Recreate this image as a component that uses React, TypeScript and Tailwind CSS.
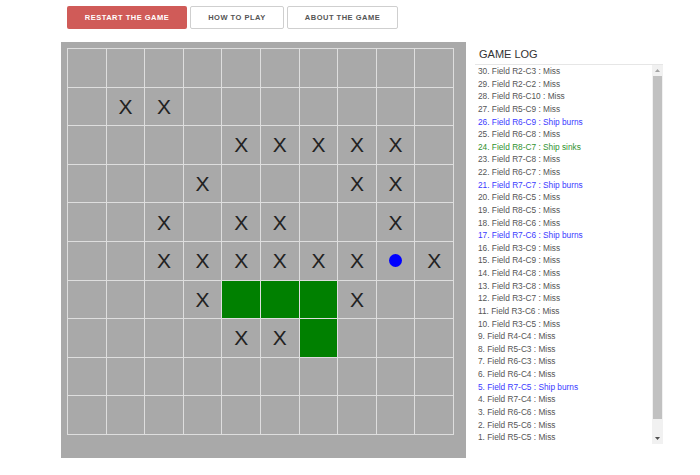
import React from "react";

type Cell = "" | "x" | "g" | "d";

const marks: Record<string, Cell> = {};
const misses = [
  "2-3","2-2","6-10","5-9","6-8","7-8","6-7","6-5","8-5","8-6","3-9","4-9","4-8","3-8","3-7","3-6","3-5","4-4","5-3","6-3","6-4","7-4","6-6","5-6","5-5",
];
misses.forEach((k) => (marks[k] = "x"));
["7-5", "7-6", "7-7", "8-7"].forEach((k) => (marks[k] = "g"));
marks["6-9"] = "d";

type Log = { t: string; c: "m" | "b" | "s" };
const logs: Log[] = [
  { t: "30. Field R2-C3 : Miss", c: "m" },
  { t: "29. Field R2-C2 : Miss", c: "m" },
  { t: "28. Field R6-C10 : Miss", c: "m" },
  { t: "27. Field R5-C9 : Miss", c: "m" },
  { t: "26. Field R6-C9 : Ship burns", c: "b" },
  { t: "25. Field R6-C8 : Miss", c: "m" },
  { t: "24. Field R8-C7 : Ship sinks", c: "s" },
  { t: "23. Field R7-C8 : Miss", c: "m" },
  { t: "22. Field R6-C7 : Miss", c: "m" },
  { t: "21. Field R7-C7 : Ship burns", c: "b" },
  { t: "20. Field R6-C5 : Miss", c: "m" },
  { t: "19. Field R8-C5 : Miss", c: "m" },
  { t: "18. Field R8-C6 : Miss", c: "m" },
  { t: "17. Field R7-C6 : Ship burns", c: "b" },
  { t: "16. Field R3-C9 : Miss", c: "m" },
  { t: "15. Field R4-C9 : Miss", c: "m" },
  { t: "14. Field R4-C8 : Miss", c: "m" },
  { t: "13. Field R3-C8 : Miss", c: "m" },
  { t: "12. Field R3-C7 : Miss", c: "m" },
  { t: "11. Field R3-C6 : Miss", c: "m" },
  { t: "10. Field R3-C5 : Miss", c: "m" },
  { t: "9. Field R4-C4 : Miss", c: "m" },
  { t: "8. Field R5-C3 : Miss", c: "m" },
  { t: "7. Field R6-C3 : Miss", c: "m" },
  { t: "6. Field R6-C4 : Miss", c: "m" },
  { t: "5. Field R7-C5 : Ship burns", c: "b" },
  { t: "4. Field R7-C4 : Miss", c: "m" },
  { t: "3. Field R6-C6 : Miss", c: "m" },
  { t: "2. Field R5-C6 : Miss", c: "m" },
  { t: "1. Field R5-C5 : Miss", c: "m" },
];

const colorClass = { m: "text-[#555555]", b: "text-[#3a3aff]", s: "text-[#2f922f]" };

export default function App() {
  const rows = Array.from({ length: 10 }, (_, i) => i + 1);
  return (
    <div className="w-[700px] h-[475px] bg-white overflow-hidden" style={{ fontFamily: '"Liberation Sans", Arial, sans-serif' }}>
      <div className="flex gap-[3px] pl-[67px] pt-[6px]">
        <button className="w-[120px] h-[23px] rounded-[2px] bg-[#d05b58] text-white font-bold text-[7.5px] tracking-[0.5px] flex items-center justify-center">
          RESTART THE GAME
        </button>
        <button className="w-[94px] h-[23px] rounded-[2px] bg-white border border-[#cfcfcf] text-[#555] font-bold text-[7.5px] tracking-[0.5px] flex items-center justify-center">
          HOW TO PLAY
        </button>
        <button className="w-[111px] h-[23px] rounded-[2px] bg-white border border-[#cfcfcf] text-[#555] font-bold text-[7.5px] tracking-[0.5px] flex items-center justify-center">
          ABOUT THE GAME
        </button>
      </div>
      <div className="flex mt-[13px] pl-[61px]">
        <div className="w-[405px] h-[416px] bg-[#a9a9a9] pt-[6px] pl-[6px]">
          <div className="w-[387px] h-[387px] bg-[#dedede] p-px gap-px grid grid-cols-10 grid-rows-10">
            {rows.map((r) =>
              rows.map((c) => {
                const m = marks[`${r}-${c}`] || "";
                return (
                  <div
                    key={`${r}-${c}`}
                    className={`flex items-center justify-center ${m === "g" ? "bg-[#008000]" : "bg-[#a9a9a9]"}`}
                  >
                    {m === "x" && <span className="text-[21px] leading-none text-[#222]">X</span>}
                    {m === "d" && <span className="w-[13px] h-[13px] rounded-full bg-[#0000ff]" />}
                  </div>
                );
              })
            )}
          </div>
        </div>
        <div className="ml-[9px] w-[188px] flex flex-col">
          <div className="h-[22px] pl-[4px] pt-[6px] text-[11px] leading-[12px] text-[#333]">GAME LOG</div>
          <div className="h-[380px] flex border-t border-[#e6e6e6]">
            <div className="flex-1 pl-[3px] overflow-hidden">
              {logs.map((l, i) => (
                <div key={i} className={`h-[12.63px] leading-[12.63px] text-[8.3px] whitespace-nowrap ${colorClass[l.c]}`}>
                  {l.t}
                </div>
              ))}
            </div>
            <div className="w-[11px] bg-[#f1f1f1] flex flex-col">
              <div className="h-[11px] flex items-center justify-center">
                <svg width="5" height="3" viewBox="0 0 5 3"><path d="M2.5 0 L5 3 L0 3 Z" fill="#a3a3a3" /></svg>
              </div>
              <div className="mx-[1px] h-[343px] bg-[#c1c1c1]" />
              <div className="flex-1 flex items-end justify-center pb-[4px]">
                <svg width="5" height="3" viewBox="0 0 5 3"><path d="M0 0 L5 0 L2.5 3 Z" fill="#505050" /></svg>
              </div>
            </div>
          </div>
        </div>
      </div>
    </div>
  );
}
